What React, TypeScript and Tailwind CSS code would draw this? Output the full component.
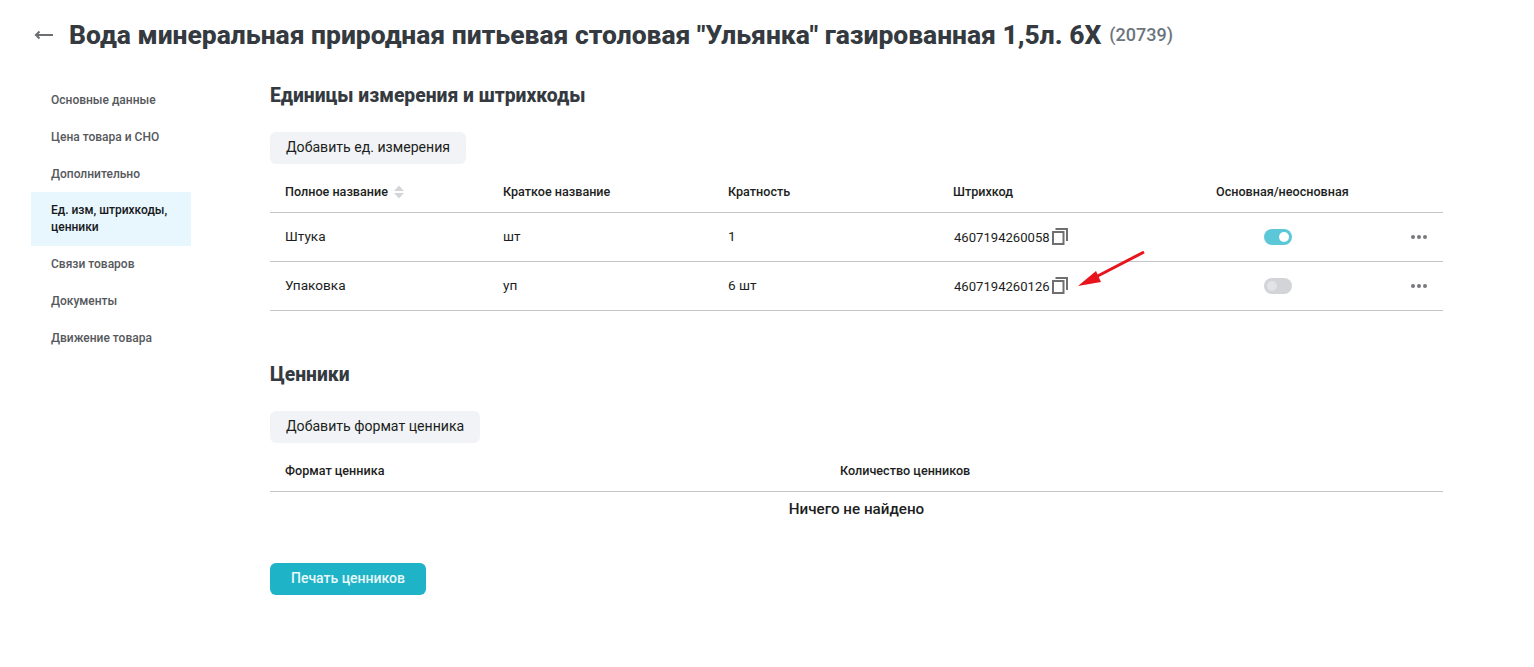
const NAV_ITEMS = [
  'Основные данные',
  'Цена товара и СНО',
  'Дополнительно',
  'Ед. изм, штрихкоды, ценники',
  'Связи товаров',
  'Документы',
  'Движение товара',
];

const ACTIVE_NAV = 'Ед. изм, штрихкоды, ценники';

const UNITS = [
  { name: 'Штука', short: 'шт', ratio: '1', barcode: '4607194260058', main: true },
  { name: 'Упаковка', short: 'уп', ratio: '6 шт', barcode: '4607194260126', main: false },
];

function CopyIcon() {
  return (
    <svg width="16" height="17" viewBox="0 0 16 17" fill="none" stroke="#6f6f6f" strokeWidth="2" className="ml-[2px] shrink-0">
      <rect x="1" y="4" width="10.5" height="12" />
      <path d="M3.5 1H15V13" />
    </svg>
  );
}

function SortIcon() {
  return (
    <svg width="10" height="14" viewBox="0 0 10 14" fill="#d3d5d9" className="ml-[6px]">
      <path d="M5 0.5L10 6H0Z" />
      <path d="M5 13.5L0 8H10Z" />
    </svg>
  );
}

function Dots() {
  return (
    <div className="flex gap-[2px]">
      <span className="size-1 rounded-full bg-[#75787d]" />
      <span className="size-1 rounded-full bg-[#75787d]" />
      <span className="size-1 rounded-full bg-[#75787d]" />
    </div>
  );
}

function Toggle({ on }: { on: boolean }) {
  return (
    <div className={`flex h-4 w-7 items-center rounded-full px-[3px] ${on ? 'justify-end bg-[#5cc8d7]' : 'justify-start bg-[#d2d4d8]'}`}>
      <span className={`size-[10px] rounded-full ${on ? 'bg-white' : 'bg-[#e2e3e6]'}`} />
    </div>
  );
}

export default function App() {
  return (
    <div className="relative h-[667px] w-[1534px] overflow-hidden bg-white font-['Roboto',sans-serif] text-[#1c1e21]">
      <header className="flex h-[69px] items-center pl-[34px]">
        <svg width="19" height="10" viewBox="0 0 19 10" fill="none" stroke="#6b6e72" strokeWidth="2" className="mr-[16px]">
          <path d="M19 5H1.5" />
          <path d="M5.5 1.5L2 5L5.5 8.5" />
        </svg>
        <h1 className="text-[26.46px] leading-8 font-extrabold whitespace-nowrap text-[#343a40]">
          Вода минеральная природная питьевая столовая "Ульянка" газированная 1,5л. 6Х
        </h1>
        <span className="ml-2 text-lg leading-8 font-medium text-[#6c757d]">(20739)</span>
      </header>

      <div className="flex pl-[31px]">
        <nav className="mt-3 w-40 shrink-0">
          {NAV_ITEMS.map((item) => (
            <div
              key={item}
              className={`flex items-center px-5 text-xs font-medium ${
                item === ACTIVE_NAV ? 'mb-[-1px] h-[54px] bg-[#e8f6fd] leading-[17px] text-[#16181b]' : 'h-[37px] leading-5 text-[#55585c]'
              }`}
            >
              {item}
            </div>
          ))}
        </nav>

        <main className="ml-[79px] w-[1173px]">
          <h2 className="mt-3 text-[19.3px] leading-[30px] font-extrabold text-[#343a40]">Единицы измерения и штрихкоды</h2>
          <button className="mt-[21px] h-8 rounded-md bg-[#f1f3f6] px-4 pb-px text-[14.1px]">Добавить ед. измерения</button>

          <div className="mt-[3px]">
            <div className="grid h-[46px] grid-cols-[218px_225px_225px_263px_1fr] items-center border-b border-[#c4c5c8] pt-[5px] pl-[15px] text-[12.6px] font-medium">
              <div className="flex items-center">
                Полное название
                <SortIcon />
              </div>
              <div>Краткое название</div>
              <div>Кратность</div>
              <div>Штрихкод</div>
              <div>Основная/неосновная</div>
            </div>
            {UNITS.map((unit) => (
              <div
                key={unit.barcode}
                className="grid h-[49px] grid-cols-[218px_225px_225px_263px_1fr] items-center border-b border-[#c4c5c8] pl-[15px] text-[13.6px]"
              >
                <div className="pb-[2px]">{unit.name}</div>
                <div className="pb-[2px]">{unit.short}</div>
                <div className="pb-[2px]">{unit.ratio}</div>
                <div className="flex items-center pl-px text-[13.1px]">
                  <span className="pt-px">{unit.barcode}</span>
                  <CopyIcon />
                </div>
                <div className="flex items-center justify-between pr-[16px] pl-[48px]">
                  <Toggle on={unit.main} />
                  <Dots />
                </div>
              </div>
            ))}
          </div>

          <h2 className="mt-[49px] text-[19.3px] leading-[30px] font-extrabold text-[#343a40]">Ценники</h2>
          <button className="mt-[21px] h-8 rounded-md bg-[#f1f3f6] px-4 pb-px text-[14.1px]">Добавить формат ценника</button>

          <div className="mt-[3px]">
            <div className="grid h-[46px] grid-cols-[555px_1fr] items-center border-b border-[#c4c5c8] pt-[5px] pl-[15px] text-[12.6px] font-medium">
              <div>Формат ценника</div>
              <div>Количество ценников</div>
            </div>
            <div className="mt-[7px] text-center text-[15.2px] leading-5 font-medium">Ничего не найдено</div>
          </div>

          <button className="mt-[44px] h-8 w-[156px] rounded-md bg-[#1fb3c8] pb-[2px] text-sm font-medium text-[#e9f8fa]">Печать ценников</button>
        </main>
      </div>

      <svg width="70" height="42" viewBox="0 0 70 42" className="absolute top-[249px] left-[1077px]">
        <path d="M67 3L13 31" stroke="#e8141c" strokeWidth="3" fill="none" />
        <path d="M1 37L19 22L24 33Z" fill="#e8141c" />
      </svg>
    </div>
  );
}
